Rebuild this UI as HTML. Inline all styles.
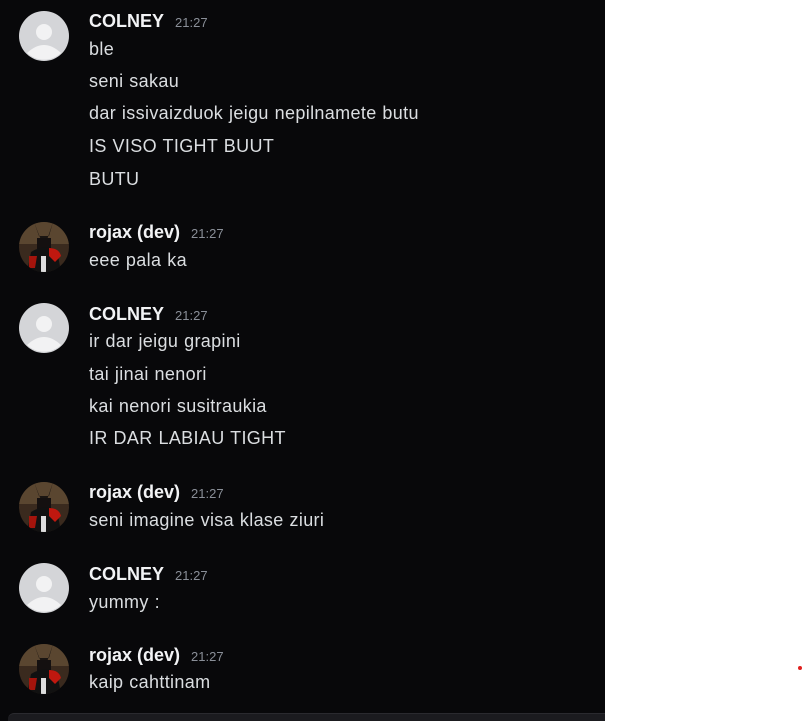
<!DOCTYPE html>
<html><head><meta charset="utf-8"><style>
html,body{margin:0;width:803px;height:721px;background:#fff;position:relative;overflow:hidden;font-family:"Liberation Sans",sans-serif}
#p{position:absolute;left:0;top:0;width:605px;height:721px;background:#08080a;overflow:hidden}
.t{position:absolute;left:89px;height:22px;line-height:22px;font-size:18px;color:#dbdee1;white-space:nowrap;word-spacing:0.5px;letter-spacing:0.35px}
.n{color:#f2f3f5;font-weight:bold;letter-spacing:0;word-spacing:0}
.n span{font-weight:normal;font-size:13px;color:#8a8f98;margin-left:11px}
.a{position:absolute;left:19px;width:50px;height:50px}
#bar{position:absolute;left:8px;top:713px;width:597px;height:10px;background:#1b1b1f;border-top:1px solid #2a2a2f;border-radius:6px 0 0 0}
#dot{position:absolute;left:798px;top:666px;width:4px;height:4px;border-radius:50%;background:#e0201e}
</style></head><body>
<svg width="0" height="0" style="position:absolute"><defs>
<symbol id="def" viewBox="0 0 50 50"><circle cx="25" cy="25" r="25" fill="#d4d5d8"/><circle cx="25" cy="21" r="8" fill="#f2f2f3"/><path d="M8 42 Q25 26 42 42 A25 25 0 0 1 8 42Z" fill="#f2f2f3"/></symbol>
<symbol id="roj" viewBox="0 0 50 50"><clipPath id="c"><circle cx="25" cy="25" r="25"/></clipPath><g clip-path="url(#c)"><rect width="50" height="50" fill="#3a2a1e"/><rect y="0" width="50" height="22" fill="#5a4630"/><path d="M15 0 L22 18 L28 18 L34 0 L30 14 L20 14Z" fill="#1a1512"/><path d="M18 16 H32 V28 H18Z" fill="#141010"/><path d="M8 50 L12 30 Q25 22 38 28 L42 50Z" fill="#111"/><path d="M30 26 Q40 26 42 34 L36 40 L30 34Z" fill="#c0180f"/><path d="M10 34 L18 34 L16 46 L10 46Z" fill="#a3140c"/><rect x="22" y="34" width="5" height="16" fill="#ddd"/></g></symbol>
</defs></svg>
<div id="p">
<svg class="a" style="top:11px"><use href="#def"/></svg>
<div class="t n" style="top:10px">COLNEY<span>21:27</span></div>
<div class="t" style="top:38px">ble</div>
<div class="t" style="top:70px">seni sakau</div>
<div class="t" style="top:102px">dar issivaizduok jeigu nepilnamete butu</div>
<div class="t" style="top:135px">IS VISO TIGHT BUUT</div>
<div class="t" style="top:168px">BUTU</div>

<svg class="a" style="top:222px"><use href="#roj"/></svg>
<div class="t n" style="top:221px">rojax (dev)<span>21:27</span></div>
<div class="t" style="top:249px">eee pala ka</div>

<svg class="a" style="top:303px"><use href="#def"/></svg>
<div class="t n" style="top:303px">COLNEY<span>21:27</span></div>
<div class="t" style="top:330px">ir dar jeigu grapini</div>
<div class="t" style="top:363px">tai jinai nenori</div>
<div class="t" style="top:395px">kai nenori susitraukia</div>
<div class="t" style="top:427px">IR DAR LABIAU TIGHT</div>

<svg class="a" style="top:482px"><use href="#roj"/></svg>
<div class="t n" style="top:481px">rojax (dev)<span>21:27</span></div>
<div class="t" style="top:509px">seni imagine visa klase ziuri</div>

<svg class="a" style="top:563px"><use href="#def"/></svg>
<div class="t n" style="top:563px">COLNEY<span>21:27</span></div>
<div class="t" style="top:591px">yummy :</div>

<svg class="a" style="top:644px"><use href="#roj"/></svg>
<div class="t n" style="top:644px">rojax (dev)<span>21:27</span></div>
<div class="t" style="top:671px">kaip cahttinam</div>
<div id="bar"></div>
</div>
<div id="dot"></div>
</body></html>
